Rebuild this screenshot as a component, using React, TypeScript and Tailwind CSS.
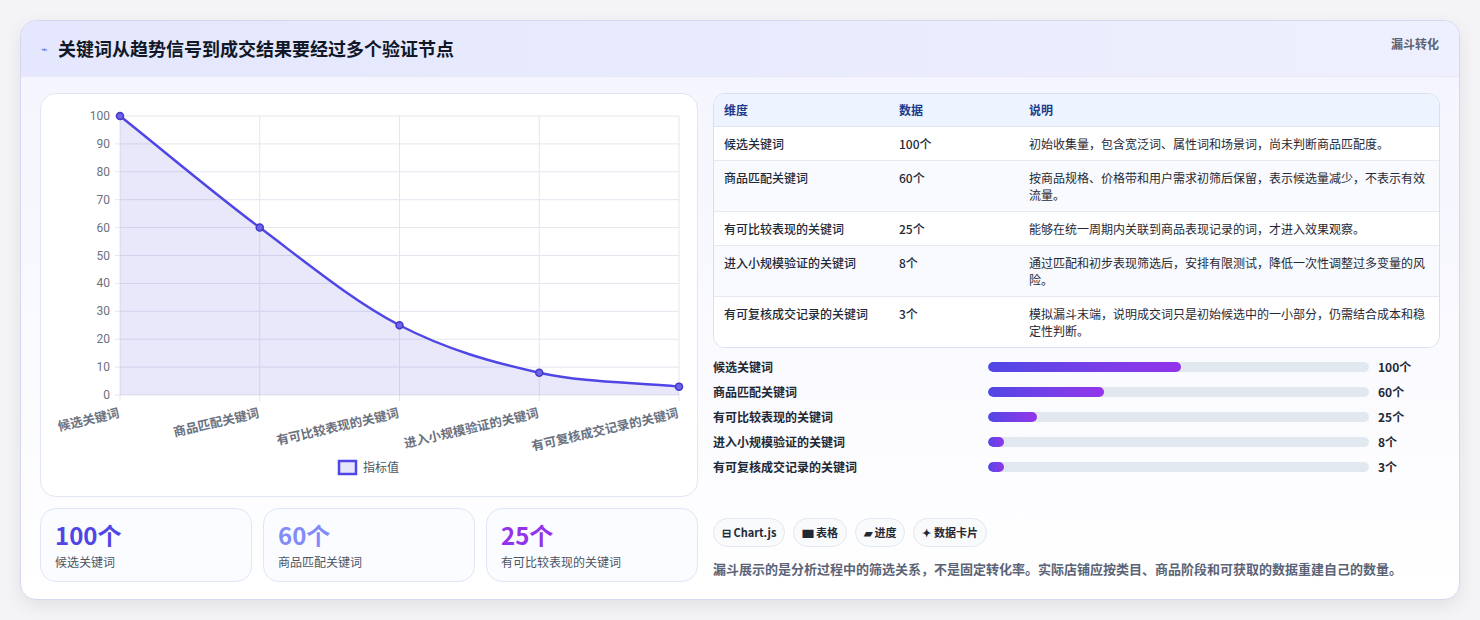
import React from "react";

const F = { fontFamily: '"Noto Sans CJK SC", "Noto Sans", sans-serif' };

const rows = [
  ["候选关键词", "100个", "初始收集量，包含宽泛词、属性词和场景词，尚未判断商品匹配度。"],
  ["商品匹配关键词", "60个", "按商品规格、价格带和用户需求初筛后保留，表示候选量减少，不表示有效流量。"],
  ["有可比较表现的关键词", "25个", "能够在统一周期内关联到商品表现记录的词，才进入效果观察。"],
  ["进入小规模验证的关键词", "8个", "通过匹配和初步表现筛选后，安排有限测试，降低一次性调整过多变量的风险。"],
  ["有可复核成交记录的关键词", "3个", "模拟漏斗末端，说明成交词只是初始候选中的一小部分，仍需结合成本和稳定性判断。"],
];
const bars = [
  ["候选关键词", "100个", 50.6],
  ["商品匹配关键词", "60个", 30.4],
  ["有可比较表现的关键词", "25个", 12.8],
  ["进入小规模验证的关键词", "8个", 4.2],
  ["有可复核成交记录的关键词", "3个", 4.2],
];

function Chart() {
  const L = 79, R = 638, T = 22, B = 301;
  const xs = [0, 1, 2, 3, 4].map((i) => L + (i * (R - L)) / 4);
  const vals = [100, 60, 25, 8, 3];
  const y = (v: number) => B - (v * (B - T)) / 100;
  const pts = vals.map((v, i) => [xs[i], y(v)]);
  const t = 0.4;
  const tan = pts.map((p, i) => {
    const a = pts[Math.max(0, i - 1)];
    const b = pts[Math.min(4, i + 1)];
    const k = i === 0 || i === 4 ? 1 : 0.5;
    return [(b[0] - a[0]) * k * t, (b[1] - a[1]) * k * t];
  });
  let d = `M${pts[0][0]},${pts[0][1]}`;
  for (let i = 0; i < 4; i++) {
    const [x0, y0] = pts[i];
    const [x1, y1] = pts[i + 1];
    d += ` C${x0 + tan[i][0] / 1.2},${y0 + tan[i][1] / 1.2} ${x1 - tan[i + 1][0] / 1.2},${y1 - tan[i + 1][1] / 1.2} ${x1},${y1}`;
  }
  const labels = ["候选关键词", "商品匹配关键词", "有可比较表现的关键词", "进入小规模验证的关键词", "有可复核成交记录的关键词"];
  return (
    <svg width="657" height="403" className="block">
      {[0, 10, 20, 30, 40, 50, 60, 70, 80, 90, 100].map((v) => (
        <g key={v}>
          <line x1={L - 5} x2={R} y1={y(v)} y2={y(v)} stroke="#e2e6ee" />
          <text x={L - 10} y={y(v) + 4} textAnchor="end" fontSize="12" fill="#6b7280" fontFamily="Roboto, sans-serif">{v}</text>
        </g>
      ))}
      {xs.map((x, i) => (
        <line key={i} x1={x} x2={x} y1={T} y2={B + 6} stroke="#e2e6ee" />
      ))}
      <path d={`${d} L${R},${B} L${L},${B} Z`} fill="rgba(99,91,220,0.14)" />
      <path d={d} fill="none" stroke="#4f46e5" strokeWidth="2.5" />
      {pts.map(([px, py], i) => (
        <circle key={i} cx={px} cy={py} r="3.5" fill="#6d64e8" stroke="#4338ca" strokeWidth="1.5" />
      ))}
      {labels.map((s, i) => (
        <text key={i} x={xs[i]} y={B + 22} textAnchor="end" fontSize="12.5" fontWeight="600" fill="#6b7280" transform={`rotate(-13 ${xs[i]} ${B + 22})`} style={F}>{s}</text>
      ))}
      <rect x="298" y="367" width="17" height="13" fill="#e7e5fb" stroke="#4f46e5" strokeWidth="2.5" />
      <text x="322" y="378" fontSize="12" fill="#4b5563" style={F}>指标值</text>
    </svg>
  );
}

export default function App() {
  return (
    <div className="w-[1480px] h-[620px] bg-[#f4f4f6] pt-[20px] pl-[20px]" style={F}>
      <div className="w-[1440px] h-[580px] rounded-2xl border border-[#d4d8f0] bg-gradient-to-b from-[#f3f4fe] to-white shadow-[0_6px_18px_rgba(0,0,0,0.08)] overflow-hidden">
        <div className="h-[56px] bg-gradient-to-r from-[#e4e7fd] to-[#eef0fe] flex items-center justify-between px-[20px] border-b border-[#e6e8f5]">
          <div className="flex items-center gap-[10px]">
            <span className="text-[#4f6ef0] text-[11px]">⌁</span>
            <span className="text-[18px] font-bold text-[#111827]">关键词从趋势信号到成交结果要经过多个验证节点</span>
          </div>
          <span className="text-[12px] font-bold text-[#5b6477] self-start mt-[14px]">漏斗转化</span>
        </div>
        <div className="flex gap-[15px] px-[19px] pt-[16px]">
          <div className="w-[658px] flex flex-col gap-[11px]">
            <div className="h-[404px] rounded-2xl border border-[#e1e6f3] bg-white"><Chart /></div>
            <div className="grid grid-cols-3 gap-[11px]">
              {[["100个", "text-[#4f46e5]", "候选关键词"], ["60个", "text-[#818cf8]", "商品匹配关键词"], ["25个", "text-[#9333ea]", "有可比较表现的关键词"]].map(([v, c, l]) => (
                <div key={l} className="h-[74px] rounded-2xl border border-[#dfe6f5] bg-[#fbfcff] px-[14px] pt-[10px]">
                  <div className={`text-[24px] leading-[32px] font-bold ${c}`}>{v}</div>
                  <div className="text-[12px] text-[#4b5563] mt-[2px]">{l}</div>
                </div>
              ))}
            </div>
          </div>
          <div className="w-[728px] flex flex-col">
            <div className="rounded-xl border border-[#d9dfee] bg-white overflow-hidden">
              <div className="h-[33px] bg-[#eef4ff] flex items-center text-[12px] font-bold text-[#1e3a8a] border-b border-[#dfe5f2]">
                <div className="w-[185px] pl-[10px]">维度</div>
                <div className="w-[130px]">数据</div>
                <div>说明</div>
              </div>
              {rows.map((r, i) => (
                <div key={i} className={`flex items-start py-[8px] text-[12px] leading-[17px] text-[#1f2937] ${i % 2 ? "bg-[#f8fafd]" : "bg-white"} ${i < 4 ? "border-b border-[#e5e9f2]" : ""}`}>
                  <div className="w-[185px] pl-[10px] font-medium">{r[0]}</div>
                  <div className="w-[130px] font-medium">{r[1]}</div>
                  <div className="w-[400px]">{r[2]}</div>
                </div>
              ))}
            </div>
            <div className="flex flex-col gap-[7px] mt-[10px]">
              {bars.map(([l, v, w]) => (
                <div key={l as string} className="flex items-center h-[18px] text-[12px] font-semibold text-[#1f2937]">
                  <div className="w-[275px]">{l}</div>
                  <div className="w-[381px] h-[10px] rounded-full bg-[#e2e8f0] overflow-hidden">
                    <div className="h-full rounded-full bg-gradient-to-r from-[#4f46e5] to-[#9333ea]" style={{ width: `${w}%` }} />
                  </div>
                  <div className="ml-[9px]">{v}</div>
                </div>
              ))}
            </div>
            <div className="flex gap-[8px] mt-[42px]">
              {["⊟ Chart.js", "▆ 表格", "▰ 进度", "✦ 数据卡片"].map((s) => (
                <span key={s} className="h-[29px] px-[8px] rounded-full border border-[#e3e7ef] bg-[#f8fafc] text-[11px] font-semibold text-[#1f2937] flex items-center">{s}</span>
              ))}
            </div>
            <div className="mt-[12px] text-[13px] font-semibold text-[#5b6477]">漏斗展示的是分析过程中的筛选关系，不是固定转化率。实际店铺应按类目、商品阶段和可获取的数据重建自己的数量。</div>
          </div>
        </div>
      </div>
    </div>
  );
}
